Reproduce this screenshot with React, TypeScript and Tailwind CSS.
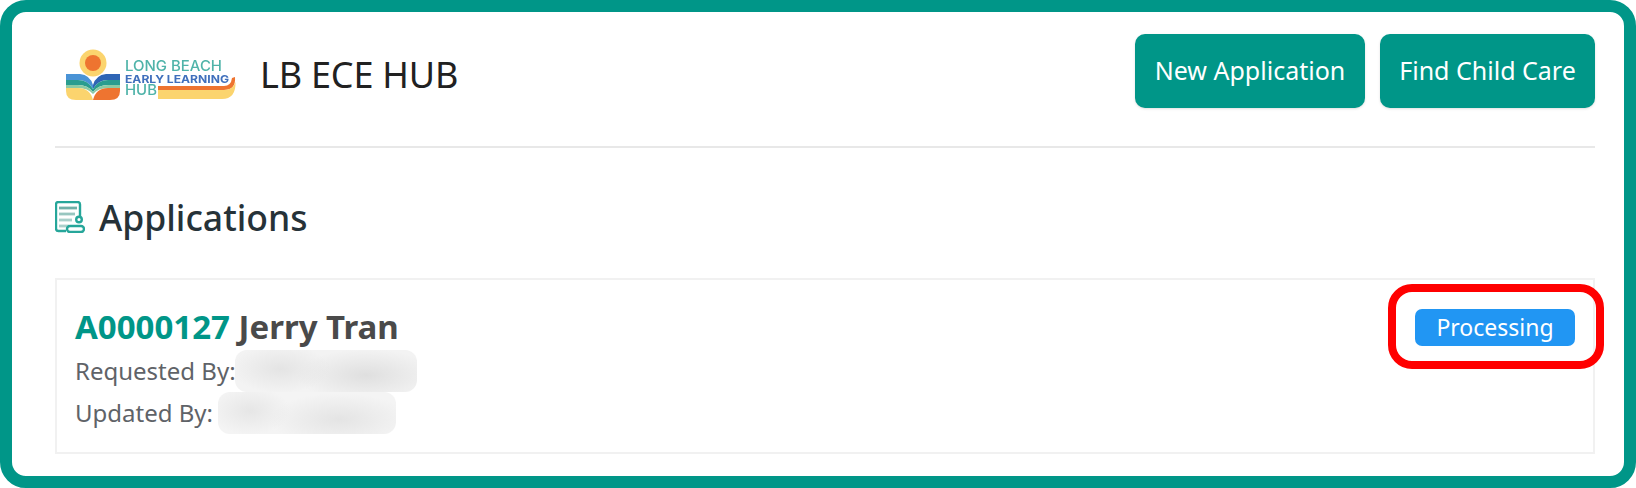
import React from "react";

function Logo() {
  return (
    <svg width="170" height="54" viewBox="0 0 170 54" className="shrink-0 blur-[0.4px]">
      <circle cx="27" cy="14" r="13.5" fill="#fbd46e" />
      <circle cx="27" cy="14" r="8" fill="#ee7430" />
      <path d="M0 25 H14 Q24 26 27 36 L27 40 Q22 31 12 31 H0 Z" fill="#4a93d6" />
      <path d="M0 31 H12 Q22 31 27 40 L27 43 Q22 36 12 36 H0 Z" fill="#2a9d8f" />
      <path d="M0 36 H12 Q22 36 27 43 L27 45 Q22 39 12 39 H0 Z" fill="#8ccba4" />
      <path d="M0 39 H12 Q24 39 27 51 H10 Q0 51 0 42 Z" fill="#fbd46e" />
      <path d="M54 25 H40 Q30 26 27 36 L27 40 Q32 31 42 31 H54 Z" fill="#2f65b5" />
      <path d="M54 31 H42 Q32 31 27 40 L27 43 Q32 36 42 36 H54 Z" fill="#2a9d8f" />
      <path d="M54 36 H42 Q32 36 27 43 L27 45 Q32 39 42 39 H54 Z" fill="#8ccba4" />
      <path d="M54 39 H42 Q30 39 27 51 H44 Q54 51 54 42 Z" fill="#ee7430" />
      <text x="59" y="21.5" fontSize="14.5" fontWeight="500" fontFamily="Inter, sans-serif" fill="#4fb3a9" textLength="97" lengthAdjust="spacingAndGlyphs">LONG BEACH</text>
      <text x="59" y="33.5" fontSize="11" fontWeight="700" fontFamily="Inter, sans-serif" fill="#3f6fbc" textLength="104" lengthAdjust="spacingAndGlyphs">EARLY LEARNING</text>
      <text x="59" y="46" fontSize="14.5" fontWeight="500" fontFamily="Inter, sans-serif" fill="#4fb3a9" textLength="32" lengthAdjust="spacingAndGlyphs">HUB</text>
      <path d="M92 37 H158 Q165 37 166 29 L169 28 Q170 41 158 41 H92 Z" fill="#ee7430" />
      <path d="M92 41 H158 Q167 41 169.5 33 Q170 50 156 50 H92 Z" fill="#fbd46e" />
    </svg>
  );
}

function AppsIcon() {
  return (
    <svg width="30" height="32" viewBox="0 0 30 32" fill="none" className="shrink-0 blur-[0.3px]">
      <path d="M25 16 V3.5 Q25 1 22.5 1 H3.5 Q1 1 1 3.5 V27.5 Q1 30 3.5 30 H11" stroke="#26a69a" strokeWidth="2.4" />
      <path d="M4 7 H22" stroke="#6fb0a8" strokeWidth="2.8" />
      <path d="M4 13 H20" stroke="#98c6c0" strokeWidth="2.8" />
      <path d="M4 19 H17" stroke="#aad0cb" strokeWidth="2.8" />
      <path d="M4 25 H14" stroke="#aad0cb" strokeWidth="2.8" />
      <circle cx="24" cy="18.5" r="2.8" stroke="#26a69a" strokeWidth="2.4" />
      <rect x="12" y="25" width="17" height="6" rx="3" stroke="#26a69a" strokeWidth="2.4" />
    </svg>
  );
}

function Redacted({ width, gradient }: { width: string; gradient: string }) {
  return <span className={`inline-block h-[42px] rounded-[12px] ${width} ${gradient}`} />;
}

export default function App() {
  return (
    <div className="w-[1636px] h-[488px] bg-white font-['Noto_Sans','Open_Sans',sans-serif]">
      <div className="h-full border-[12px] border-[#009688] rounded-[26px] bg-white pl-[43px] pr-[29px] pt-[22px] flex flex-col">
        <header className="h-[114px] border-b-2 border-[#e8e8e8] flex items-start justify-between shrink-0">
          <div className="flex items-center h-[74px]">
            <div className="ml-[11px] mt-[10px] flex"><Logo /></div>
            <h1 className="ml-[24px] mt-[7px] text-[36px] leading-[60px] text-[#212121] font-normal tracking-[-0.2px]">LB ECE HUB</h1>
          </div>
          <div className="flex gap-[15px]">
            <button className="w-[230px] h-[74px] rounded-[10px] bg-[#009688] text-white text-[25px] shadow-sm">New Application</button>
            <button className="w-[215px] h-[74px] rounded-[10px] bg-[#009688] text-white text-[25px] shadow-sm">Find Child Care</button>
          </div>
        </header>
        <div className="flex items-center h-[62px] mt-[38px] gap-[14px]">
          <AppsIcon />
          <h2 className="text-[35.5px] leading-[46px] text-[#263238] font-medium">Applications</h2>
        </div>
        <section className="mt-[30px] h-[176px] border-2 border-[#f1f1f1] flex justify-between pl-[18px] pr-[18px]">
          <div className="pt-[24px]">
            <div className="text-[33px] leading-[46px] font-bold">
              <span className="text-[#009688]">A0000127</span> <span className="text-[#4a4a4a]">Jerry Tran</span>
            </div>
            <div className="flex items-center h-[42px] text-[24px] text-[#5f6368]">
              <span>Requested By:</span>
              <Redacted width="w-[182px] -ml-[1px]" gradient="bg-[radial-gradient(50px_24px_at_25%_45%,#e4e4e4,transparent),radial-gradient(70px_26px_at_72%_60%,#dfdfdf,transparent),linear-gradient(#f3f3f3,#f3f3f3)]" />
            </div>
            <div className="flex items-center h-[42px] text-[24px] text-[#5f6368]">
              <span>Updated By:</span>
              <Redacted width="w-[178px] ml-[5px]" gradient="bg-[radial-gradient(40px_24px_at_18%_45%,#e6e6e6,transparent),radial-gradient(70px_26px_at_68%_65%,#e4e4e4,transparent),linear-gradient(#f4f4f4,#f4f4f4)]" />
            </div>
          </div>
          <div className="pt-[29px]">
            <div className="relative">
              <span className="flex items-center justify-center w-[160px] h-[37px] rounded-[7px] bg-[#2196f3] text-white text-[23px]">Processing</span>
              <div className="absolute left-[-27px] top-[-25px] w-[216px] h-[85px] border-[8px] border-[#ff0000] rounded-[24px]" />
            </div>
          </div>
        </section>
      </div>
    </div>
  );
}
